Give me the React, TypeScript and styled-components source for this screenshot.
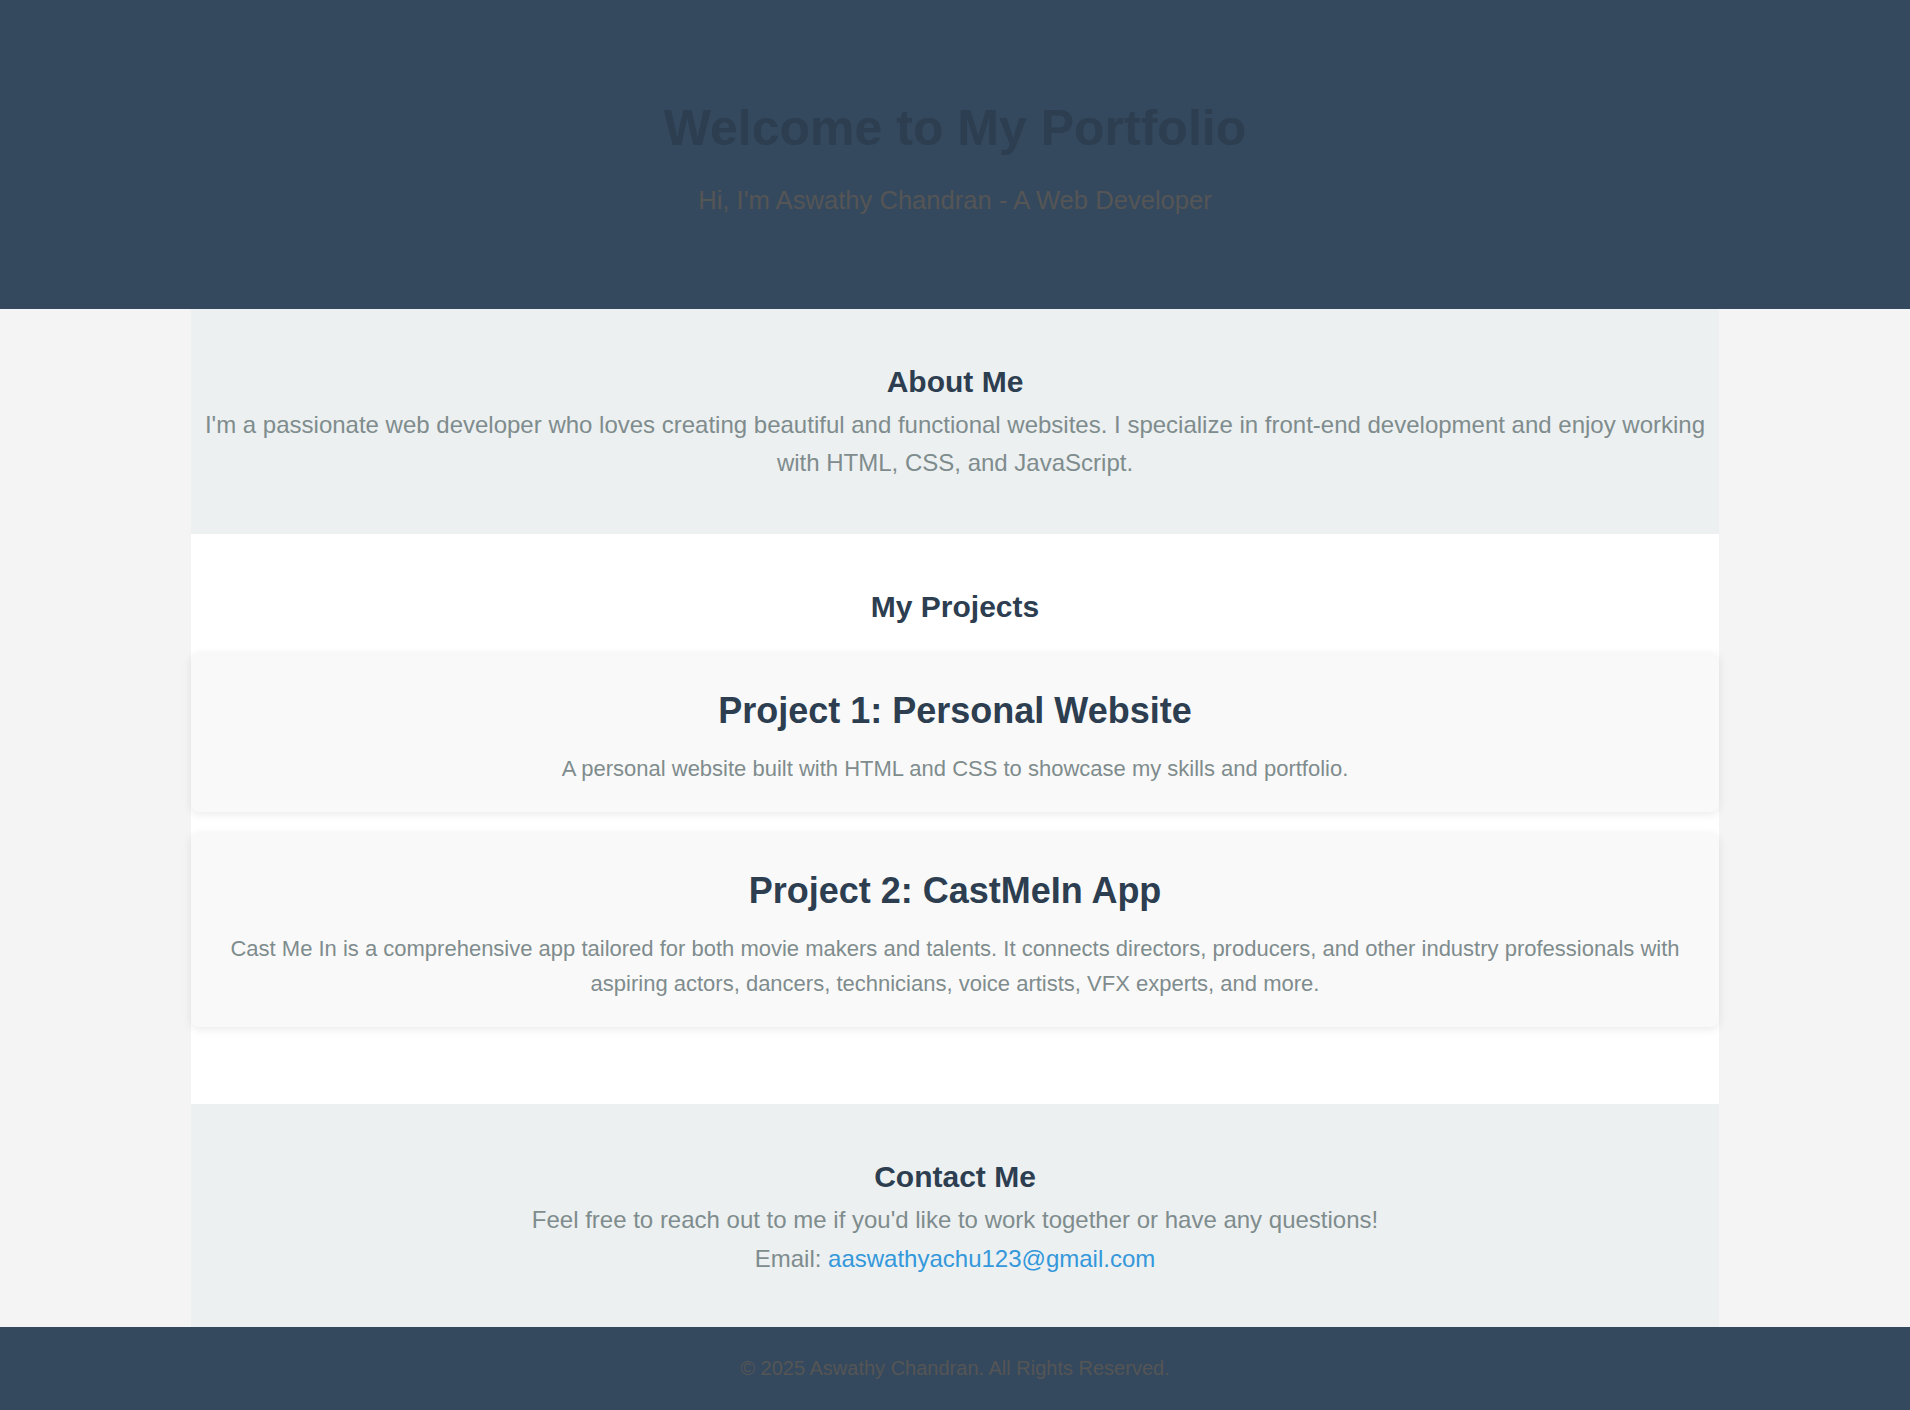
import styled, { createGlobalStyle } from "styled-components";

const GlobalStyle = createGlobalStyle`
  body {
    margin: 0;
    background: #f4f4f4;
    font-family: "Liberation Sans", Arial, Helvetica, sans-serif;
  }
`;

const Hero = styled.header`
  background: #34495e;
  text-align: center;
  padding: 99px 20px 94px;

  h1 {
    margin: 0 0 29px;
    font-size: 50px;
    font-weight: bold;
    color: #2c3e50;
  }

  p {
    margin: 0;
    font-size: 25.6px;
    color: #555;
  }
`;

const Main = styled.main`
  width: 80%;
  margin: 0 auto;
`;

const Section = styled.section<{ $tone: "light" | "white"; $bottom?: number }>`
  background: ${({ $tone }) => ($tone === "light" ? "#ecf0f1" : "#ffffff")};
  text-align: center;
  padding: 56px 0 ${({ $bottom = 51 }) => $bottom}px;
`;

const SectionTitle = styled.h2`
  margin: 0 0 7px;
  font-size: 30px;
  font-weight: bold;
  color: #2c3e50;
`;

const Text = styled.p`
  margin: 0;
  font-size: 24px;
  line-height: 1.6;
  color: #7f8c8d;

  a {
    color: #3498db;
    text-decoration: none;
  }
`;

// h2 margin collapses into this one, so the full gap sits here
const ProjectList = styled.div`
  display: flex;
  flex-direction: column;
  gap: 21px;
  margin: 29px 0 26px;
`;

const Card = styled.div`
  background: #f9f9f9;
  border-radius: 8px;
  box-shadow: 0 2px 10px rgba(0, 0, 0, 0.09);
  padding: 37px 20px 26px;

  h3 {
    margin: 0 0 19px;
    font-size: 36px;
    font-weight: bold;
    color: #2c3e50;
  }

  p {
    margin: 0;
    font-size: 22px;
    line-height: 1.6;
    color: #7f8c8d;
  }
`;

const Footer = styled.footer`
  background: #34495e;
  text-align: center;
  padding: 30px 20px;

  p {
    margin: 0;
    font-size: 20px;
    color: #555;
  }
`;

const projects = [
  {
    title: "Project 1: Personal Website",
    text: "A personal website built with HTML and CSS to showcase my skills and portfolio.",
  },
  {
    title: "Project 2: CastMeIn App",
    text: "Cast Me In is a comprehensive app tailored for both movie makers and talents. It connects directors, producers, and other industry professionals with aspiring actors, dancers, technicians, voice artists, VFX experts, and more.",
  },
];

function App() {
  return (
    <>
      <GlobalStyle />
      <Hero>
        <h1>Welcome to My Portfolio</h1>
        <p>Hi, I'm Aswathy Chandran - A Web Developer</p>
      </Hero>
      <Main>
        <Section $tone="light">
          <SectionTitle>About Me</SectionTitle>
          <Text>
            I'm a passionate web developer who loves creating beautiful and functional websites. I
            specialize in front-end development and enjoy working with HTML, CSS, and JavaScript.
          </Text>
        </Section>
        <Section $tone="white">
          <SectionTitle>My Projects</SectionTitle>
          <ProjectList>
            {projects.map((p) => (
              <Card key={p.title}>
                <h3>{p.title}</h3>
                <p>{p.text}</p>
              </Card>
            ))}
          </ProjectList>
        </Section>
        <Section $tone="light" $bottom={49}>
          <SectionTitle>Contact Me</SectionTitle>
          <Text>Feel free to reach out to me if you'd like to work together or have any questions!</Text>
          <Text>
            Email: <a href="mailto:aaswathyachu123@gmail.com">aaswathyachu123@gmail.com</a>
          </Text>
        </Section>
      </Main>
      <Footer>
        <p>&copy; 2025 Aswathy Chandran. All Rights Reserved.</p>
      </Footer>
    </>
  );
}

export default App;
